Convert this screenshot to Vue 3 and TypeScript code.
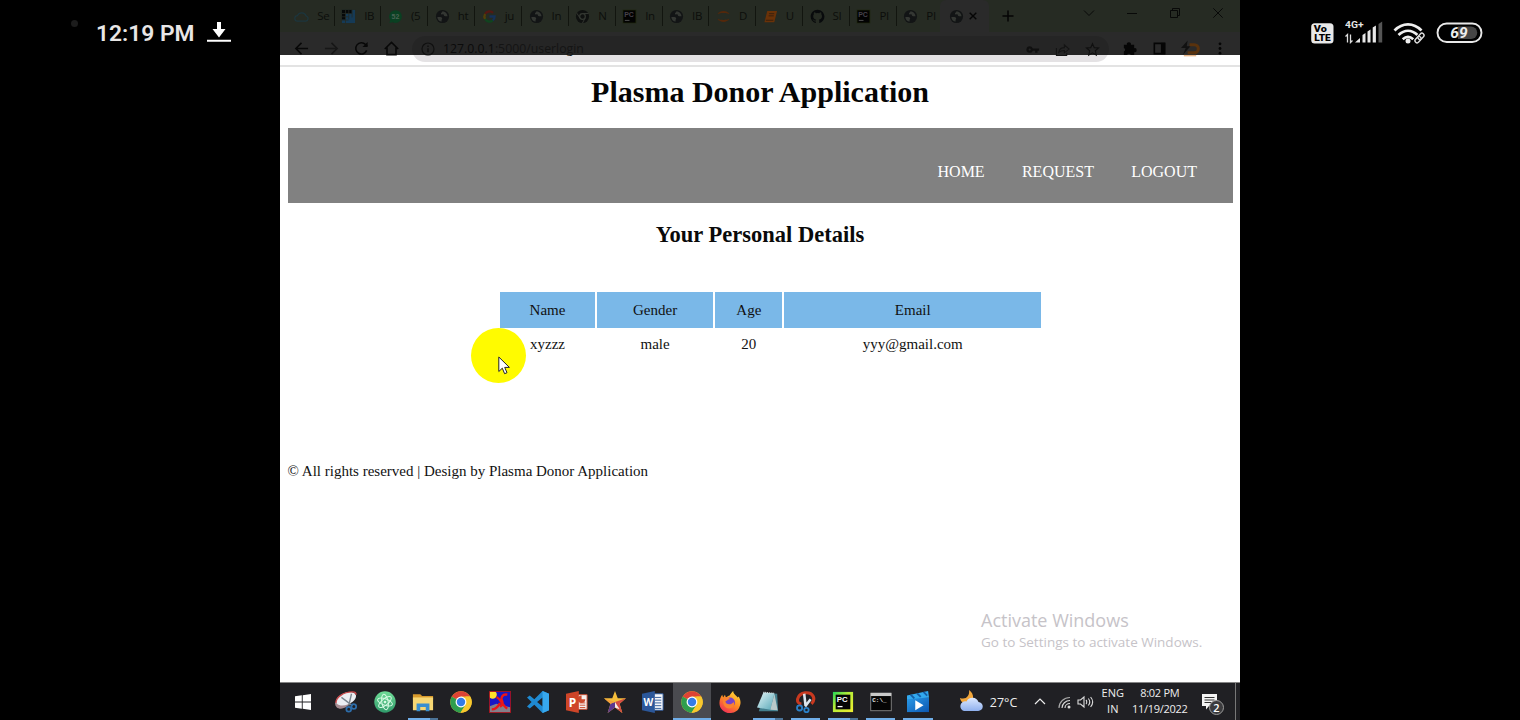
<script setup lang="ts">
interface Tab {
  icon: string
  title: string
}
interface TaskItem {
  icon: string
  running?: boolean
  active?: boolean
  stacked?: boolean
}

const tabs: Tab[] = [
  { icon: 'cloud', title: 'Se' },
  { icon: 'ibm', title: 'IB' },
  { icon: 'chat', title: '(5' },
  { icon: 'globe', title: 'ht' },
  { icon: 'google', title: 'ju' },
  { icon: 'globe', title: 'In' },
  { icon: 'chromium', title: 'N' },
  { icon: 'pc', title: 'In' },
  { icon: 'globe', title: 'IB' },
  { icon: 'jupyter', title: 'D' },
  { icon: 'book', title: 'U' },
  { icon: 'github', title: 'SI' },
  { icon: 'pc', title: 'PI' },
  { icon: 'globe', title: 'PI' },
]

const tasks: TaskItem[] = [
  { icon: 'snip' },
  { icon: 'atom' },
  { icon: 'folder', running: true, stacked: true },
  { icon: 'chrome' },
  { icon: 'paint' },
  { icon: 'vscode' },
  { icon: 'ppt' },
  { icon: 'star' },
  { icon: 'word' },
  { icon: 'chrome', running: true, active: true },
  { icon: 'firefox' },
  { icon: 'notepad', running: true, stacked: true },
  { icon: 'scissors', running: true },
  { icon: 'pycharm', running: true, stacked: true },
  { icon: 'cmd', running: true },
  { icon: 'movies', running: true },
]

const headers = ['Name', 'Gender', 'Age', 'Email']
const row = ['xyzzz', 'male', '20', 'yyy@gmail.com']
const links = ['HOME', 'REQUEST', 'LOGOUT']
</script>

<template>
  <div class="phone">
    <svg class="defs" width="0" height="0">
      <defs>
        <linearGradient id="gAtom" x1="0" y1="0" x2="0" y2="1"><stop offset="0" stop-color="#6fdc97" /><stop offset="1" stop-color="#2f9a6a" /></linearGradient>
        <linearGradient id="gFox" x1="0.8" y1="0" x2="0.2" y2="1"><stop offset="0" stop-color="#ffdb3a" /><stop offset=".5" stop-color="#ff8a22" /><stop offset="1" stop-color="#f02a5a" /></linearGradient>
        <linearGradient id="gPad" x1="0" y1="0" x2="1" y2="1"><stop offset="0" stop-color="#e4f6f8" /><stop offset="1" stop-color="#58a8b8" /></linearGradient>
        <linearGradient id="gPy" x1="0" y1="0" x2="1" y2="1"><stop offset="0" stop-color="#21d759" /><stop offset=".4" stop-color="#b2ee38" /><stop offset="1" stop-color="#f2ee30" /></linearGradient>
        <linearGradient id="gMov" x1="0" y1="0" x2="1" y2="1"><stop offset="0" stop-color="#2a9be8" /><stop offset="1" stop-color="#0c56b0" /></linearGradient>
        <linearGradient id="gCloud" x1="0" y1="0" x2="0" y2="1"><stop offset="0" stop-color="#dbe8ff" /><stop offset="1" stop-color="#8fb0ee" /></linearGradient>

        <symbol id="cloud" viewBox="0 0 16 16"><path d="M4 13h8.500a2.800 2.800 0 0 0 .4-5.500A5 5 0 0 0 3.700 7 3 3 0 0 0 4 13z" fill="none" stroke="#1c363e" stroke-width="1.300" /></symbol>
        <symbol id="ibm" viewBox="0 0 16 16">
          <rect x="1" y="1" width="14" height="14" fill="#153a56" /><rect x="1" y="1" width="10.500" height="3.800" fill="#060809" /><rect x="1" y="4.800" width="3.800" height="6.500" fill="#060809" />
          <path d="M4.800 1v14M8.300 1v10M11.800 1v8M1 4.800h10M1 8.300h7M1 11.800h7" stroke="#252a23" stroke-width=".8" />
        </symbol>
        <symbol id="chat" viewBox="0 0 16 16"><circle cx="8" cy="8" r="6.800" fill="#0a4022" /><path d="M1.500 14.800l1-4 3 3z" fill="#0a4022" /><text x="8" y="10.700" text-anchor="middle" font-size="7.500" font-weight="700" fill="#4a6354" font-family="Liberation Sans, sans-serif">52</text></symbol>
        <symbol id="globe" viewBox="0 0 16 16"><circle cx="8" cy="8" r="7" fill="#121415" /><path d="M2.500 8.500c2.300 0 4.300-.5 5.100 1.200.4 1.200-1 1.300-.5 3.600-2.700 0-4.500-2.200-4.600-4.800zM8 2.500c-.5 1.800-2 1.500-1.600 2.800 1 1.200 2.400-.3 3 1 .3 1.500 1.600 1.700 4 1.400C13 4.700 11 2.700 8 2.500z" fill="#343733" /></symbol>
        <symbol id="google" viewBox="0 0 16 16"><g fill="none" stroke-width="2.500"><path d="M3.300 5.300A5.400 5.400 0 0 1 11.800 4.200" stroke="#541813" /><path d="M3.300 10.700a5.400 5.400 0 0 1 0-5.400" stroke="#524008" /><path d="M11.500 12.100a5.400 5.400 0 0 1-8.200-1.400" stroke="#10441f" /><path d="M8 8h5.400a5.400 5.400 0 0 1-1.900 4.100" stroke="#153158" /></g></symbol>
        <symbol id="chromium" viewBox="0 0 16 16"><circle cx="8" cy="8" r="7" fill="#0f1110" /><circle cx="8" cy="8" r="3" fill="#0f1110" stroke="#343832" stroke-width="1.300" /><path d="M8 4.800h6.500M5.200 9.500L2 4.500M10.800 9.500L8 14.900" stroke="#343832" /></symbol>
        <symbol id="pc" viewBox="0 0 16 16"><rect x=".8" y=".8" width="14.400" height="14.400" fill="#1c2409" /><rect x="1.500" y="1.500" width="12.800" height="13" fill="#020202" /><text x="2.300" y="8.500" font-size="7.500" font-weight="700" fill="#454149" font-family="Liberation Sans, sans-serif">PC</text><path d="M3 12.200h5" stroke="#454545" stroke-width="1.200" /></symbol>
        <symbol id="jupyter" viewBox="0 0 16 16"><path d="M1.500 5.500C4.200 1 11.800 1 14.500 5.500 10.800 3.800 5.200 3.800 1.500 5.500zM1.500 10.500c2.700 4.500 10.300 4.500 13 0-3.700 1.700-9.300 1.700-13 0z" fill="#54280b" /></symbol>
        <symbol id="book" viewBox="0 0 16 16"><path d="M4.500 2l10.500 0-3 12-10.500 0z" fill="#6a3208" /><path d="M6.500 5h5.500M6 7.300h5.500M3 12h8" stroke="#321e0e" stroke-width=".9" /></symbol>
        <symbol id="github" viewBox="0 0 16 16"><path fill="#080a0c" d="M8 .7C3.900.7.700 4 .7 8c0 3.200 2.100 6 5 7 .4.1.5-.2.500-.4v-1.400c-2 .4-2.500-.9-2.500-.9-.3-.8-.8-1-.8-1-.7-.5.1-.5.1-.5.700.1 1.100.8 1.100.8.700 1.100 1.700.8 2.200.6 0-.5.2-.8.400-1-1.600-.2-3.300-.8-3.300-3.600 0-.8.300-1.500.8-2-.1-.2-.4-1 .1-2 0 0 .6-.2 2 .8a7 7 0 0 1 3.600 0c1.400-1 2-.8 2-.8.400 1 .2 1.800.1 2 .5.500.8 1.200.8 2 0 2.800-1.700 3.400-3.400 3.600.3.200.5.700.5 1.400v2c0 .2.100.5.500.4 2.900-1 5-3.700 5-7C15.300 4 12.100.7 8 .7z" /></symbol>

        <symbol id="snip" viewBox="0 0 24 24"><path d="M0 12.500C0 20 7 21 13 17l9-9z" fill="#a58b90" /><ellipse cx="12" cy="8.500" rx="11.500" ry="6.500" transform="rotate(-22 12 8.500)" fill="#eceef2" /><path d="M1 13C1 7 9 1 19 1c3 0 4 1 4 3" fill="none" stroke="#c8484a" stroke-width="1.500" /><path d="M7 7l12 9M18 3l-3 13" stroke="#7b858e" stroke-width="1.500" /><circle cx="15" cy="20" r="2.600" fill="none" stroke="#2d6daa" stroke-width="1.900" /><circle cx="20.500" cy="17" r="2.600" fill="none" stroke="#2d6daa" stroke-width="1.900" /></symbol>
        <symbol id="atom" viewBox="0 0 24 24"><circle cx="12" cy="12" r="11.700" fill="url(#gAtom)" /><g fill="none" stroke="#d6fae3" stroke-width="1.100"><ellipse cx="12" cy="12" rx="8.500" ry="3.500" transform="rotate(20 12 12)" /><ellipse cx="12" cy="12" rx="8.500" ry="3.500" transform="rotate(80 12 12)" /><ellipse cx="12" cy="12" rx="8.500" ry="3.500" transform="rotate(140 12 12)" /></g><circle cx="12" cy="12" r="1.500" fill="#d6fae3" /></symbol>
        <symbol id="folder" viewBox="0 0 24 24"><path d="M1 3.500h8l2 2h12v4H1z" fill="#d99a2c" /><path d="M1 7h22v14H1z" fill="#f7d774" /><path d="M5 13.500h14V22h-4v-4.500H9V22H5z" fill="#3a8fd0" /></symbol>
        <symbol id="chrome" viewBox="0 0 24 24"><circle cx="12" cy="12" r="11.700" fill="#f4c32c" /><path d="M12 12L1.900 6.100A11.700 11.700 0 0 1 22.100 6.100H12z" fill="#dd4335" /><path d="M1.900 6.100A11.700 11.700 0 0 0 11.500 23.700L17 15l-5-3z" fill="#2f9e4e" /><path d="M22.100 6.100A11.700 11.700 0 0 1 11.500 23.700L17 15l0-8.900z" fill="#f8c82e" /><circle cx="12" cy="12" r="5.900" fill="#fff" /><circle cx="12" cy="12" r="4.600" fill="#347be8" /></symbol>
        <symbol id="paint" viewBox="0 0 24 24"><rect width="24" height="24" fill="#1717c6" /><path d="M0 17l8-3 16 4v6H0z" fill="#83808a" /><circle cx="4" cy="4" r="4.500" fill="#ffe22a" /><path d="M20 4C14 3 13 8 14 10s2 5-2 7M8 7c4 0 7 10 12 12M3 20c4 0 7-3 9-7" fill="none" stroke="#eb1716" stroke-width="2.600" /><rect x=".5" y=".5" width="23" height="23" fill="none" stroke="#a3131e" /></symbol>
        <symbol id="vscode" viewBox="0 0 24 24"><path d="M17 0l7 3v18l-7 3-9-9-5 4-3-2 5-5-5-5 3-2 5 4zM17 7l-6 5 6 5z" fill="#1f8ad2" fill-rule="evenodd" /><path d="M17 0l7 3v18l-7 3z" fill="#37a8ee" /></symbol>
        <symbol id="ppt" viewBox="0 0 24 24"><path d="M11 4h12v16H11z" fill="#f6efed" stroke="#cc4a2d" /><path d="M15 13h6M15 15.500h6M15 18h6" stroke="#cc4a2d" /><path d="M17 5v4h4a4 4 0 1 1-4-4z" fill="#cc4a2d" /><path d="M0 3l14-3v24L0 21z" fill="#cf4528" /><text x="3" y="17" font-size="13" font-weight="700" fill="#fff" font-family="Open Sans, sans-serif">P</text></symbol>
        <symbol id="star" viewBox="0 0 24 24"><path d="M12 0l3 8h9l-7 6 3 10-8-6-8 6 3-10-7-6h9z" fill="#f4bd3b" /><path d="M12 12l12-4-7 6zM12 12l5 2 3 10-8-6z" fill="#d44a44" /><path d="M12 12v6l-8 6 3-10z" fill="#5d3790" /><path d="M12 12L0 8l7 6z" fill="#f4a03b" /><path d="M12 12v6l5 2z" fill="#f5eee7" /></symbol>
        <symbol id="word" viewBox="0 0 24 24"><path d="M11 3h12v18H11z" fill="#f4f6fa" stroke="#2b5797" /><path d="M14 7h7M14 10h7M14 13h7M14 16h7M14 19h7" stroke="#2b5797" /><path d="M0 3l14-3v24L0 21z" fill="#2b579a" /><text x="1.500" y="16.500" font-size="11" font-weight="700" fill="#fff" font-family="Open Sans, sans-serif">W</text></symbol>
        <symbol id="firefox" viewBox="0 0 24 24"><path d="M12 24C5 24 .5 19 .5 13c0-4 1.500-7 3-9l1 3 2-3 1 3c2-1 3-2 4-2 1-2 3-4 4-5 0 3 2 4 4 6l1 1 1-1c3 5 2 9 1 11-1 4-5 7-9.500 7z" fill="url(#gFox)" /><circle cx="12" cy="12.500" r="5.400" fill="#7542c8" /><path d="M5 7c3-1 6 0 7 2-3 0-3 2-5 2 0 4 6 5 9 1 2 5-2 7-5 7-5 0-8-6-6-12z" fill="#fb8230" /></symbol>
        <symbol id="notepad" viewBox="0 0 24 24"><path d="M8 2l14 1 1 19H2z" fill="#437f8e" /><path d="M7 1.500l12 1-4.500 18L0 18z" fill="url(#gPad)" /><path d="M19 3l3.500 18-8-.5z" fill="#b9c9c9" /><path d="M7 1.500l12 1" stroke="#d8e0df" stroke-width="1.500" stroke-dasharray="1 1" /></symbol>
        <symbol id="scissors" viewBox="0 0 24 24"><path d="M7 14C0 14 2 3 11 2s12 7 7 12" fill="none" stroke="#c9391f" stroke-width="3.400" /><path d="M10 3l1.500 13M17 9l-6 8" stroke="#dce5ed" stroke-width="2.800" /><circle cx="5" cy="18.500" r="2.800" fill="none" stroke="#2b80c8" stroke-width="2" /><circle cx="12.500" cy="20.800" r="2.400" fill="none" stroke="#2b80c8" stroke-width="2" /></symbol>
        <symbol id="pycharm" viewBox="0 0 24 24"><rect x="1" y="1" width="22" height="22" fill="url(#gPy)" /><rect x="4" y="4" width="16" height="16" fill="#050505" /><text x="5.300" y="12" font-size="8.500" font-weight="700" fill="#fff" font-family="Liberation Sans, sans-serif">PC</text><path d="M6 17h5.500" stroke="#fff" stroke-width="1.400" /></symbol>
        <symbol id="cmd" viewBox="0 0 24 24"><rect x=".8" y="2.500" width="22.400" height="19" fill="#050505" stroke="#858585" /><rect x=".8" y="2" width="22.400" height="3.500" fill="#c9c9c9" /><text x="2.500" y="12" font-size="6.500" font-weight="700" fill="#e5e5e5" font-family="Liberation Mono, monospace">C:\_</text></symbol>
        <symbol id="movies" viewBox="0 0 24 24"><path d="M0 7h24v16H0z" fill="url(#gMov)" /><path d="M0 5L23 0l1 7L0 9z" fill="#32a9ef" /><path d="M4 4l4 4M11 2.500l4 4M18 1l4 4" stroke="#155da5" stroke-width="2" /><path d="M9 10l9 5.500L9 21z" fill="#fff" /></symbol>
      </defs>
    </svg>

    <aside class="status left">
      <i class="dot"></i>
      <span class="clock">12:19 PM</span>
      <svg class="download" width="24" height="20" viewBox="0 0 24 20"><path d="M10 0h4v7h4.500L12 15.500 5.500 7H10zM0 17.700h24v2H0z" fill="#fff" /></svg>
    </aside>

    <main class="screen">
      <header class="browser">
        <div class="strip">
          <div v-for="(t, i) in tabs" :key="i" class="tab" :class="{ last: i === 13 }">
            <svg width="15" height="15"><use :href="'#' + t.icon" /></svg>
            <span>{{ t.title }}</span>
          </div>
          <div class="tab current">
            <svg width="15" height="15"><use href="#globe" /></svg>
            <svg width="8" height="8" viewBox="0 0 8 8"><path d="M.7.7l6.600 6.600M7.300.7L.7 7.300" stroke="#050505" stroke-width="1.400" /></svg>
          </div>
          <svg class="plus" width="12" height="12" viewBox="0 0 12 12"><path d="M6 .5v11M.5 6h11" stroke="#050505" stroke-width="1.500" /></svg>
          <div class="controls">
            <svg viewBox="0 0 12 12"><path d="M1 3.500l5 5 5-5" /></svg>
            <svg viewBox="0 0 12 12"><path d="M1 6.500h10" /></svg>
            <svg viewBox="0 0 12 12"><path d="M1.500 3.500h7v7h-7zM3.500 3.500v-2h7v7h-2" /></svg>
            <svg viewBox="0 0 12 12"><path d="M1.300 1.300l9.400 9.400M10.700 1.300l-9.400 9.400" /></svg>
          </div>
        </div>
        <div class="toolbar">
          <div class="navicons">
            <svg viewBox="0 0 16 16"><path d="M15 8H2.500M8 2L2 8l6 6" /></svg>
            <svg viewBox="0 0 16 16" class="faint"><path d="M1 8h12.500M8 2l6 6-6 6" /></svg>
            <svg viewBox="0 0 16 16"><path d="M13.500 10A6 6 0 1 1 12.300 3.800L14 5.500" /><path d="M14.500 1v5.500H9z" fill="#080808" stroke="none" /></svg>
            <svg viewBox="0 0 16 16"><path d="M.8 8.500L8 1.500l7.200 7M3.200 7v7.500h9.600V7" /></svg>
          </div>
          <div class="omnibox">
            <svg width="14" height="14" viewBox="0 0 14 14"><circle cx="7" cy="7" r="6" fill="none" stroke="#101010" stroke-width="1.200" /><path d="M7 6.200v4M7 3.500v1.400" stroke="#101010" stroke-width="1.500" /></svg>
            <span class="url">127.0.0.1<em>:5000/userlogin</em></span>
            <div class="actions">
              <svg viewBox="0 0 16 16"><path fill="#101010" fill-rule="evenodd" d="M5 4.500a3.500 3.500 0 1 0 3.300 4.700h2.500V11.500h2.500V9.200H15V6.800H8.300A3.500 3.500 0 0 0 5 4.500zm0 2.300a1.200 1.200 0 1 1 0 2.400 1.200 1.200 0 0 1 0-2.400z" /></svg>
              <svg viewBox="0 0 16 16"><path d="M1.500 6.500v8h11v-3M4 11c.5-3 3-5 6-5V3l5 4.500-5 4V9c-3 0-4.500.5-6 2z" fill="none" stroke="#141414" stroke-width="1.100" /></svg>
              <svg viewBox="0 0 16 16"><path d="M8 1.800l1.900 4.200 4.500.4-3.400 3 1 4.500L8 11.500l-4 2.400 1-4.500-3.400-3 4.500-.4z" fill="none" stroke="#101010" stroke-width="1.200" /></svg>
            </div>
          </div>
          <div class="extensions">
            <svg viewBox="0 0 16 16"><path d="M2 4h3.200a2.200 2.200 0 1 1 4.300 0H13v3.600a2.200 2.200 0 1 1 0 4.300V15H9.400a2.200 2.200 0 0 0-4 0H2v-3.800a2 2 0 0 0 0-3.800z" fill="#060606" /></svg>
            <svg viewBox="0 0 16 16"><path d="M2.500 2.500h11v11h-11z" fill="none" stroke="#050505" stroke-width="1.700" /><path d="M9.500 2h4.500v12H9.500z" fill="#050505" /></svg>
            <svg class="brand" viewBox="0 0 20 18"><path d="M7 0L0 8h5l-3 7 8-9H6z" fill="#111" /><path d="M9 4.500h5a4 4 0 0 1 0 8.500H7" fill="none" stroke="#59320d" stroke-width="3.200" /><path d="M3 16h13" stroke="#e8b78a" stroke-width="1.500" /></svg>
            <svg class="dots" viewBox="0 0 4 16"><g fill="#050505"><circle cx="2" cy="3" r="1.500" /><circle cx="2" cy="8" r="1.500" /><circle cx="2" cy="13" r="1.500" /></g></svg>
          </div>
        </div>
      </header>

      <section class="page">
        <h1>Plasma Donor Application</h1>
        <nav><a v-for="l in links" :key="l">{{ l }}</a></nav>
        <h2>Your Personal Details</h2>
        <div class="table">
          <div v-for="h in headers" :key="h" class="th">{{ h }}</div>
          <div v-for="c in row" :key="c" class="td">{{ c }}</div>
          <div class="halo">
            <svg width="12" height="19" viewBox="0 0 12 19"><path d="M.8 1v14.500l3.500-3.300 2.300 5.500 2.400-1-2.300-5.300h4.700z" fill="#fff" stroke="#222" stroke-width="1" /></svg>
          </div>
        </div>
        <footer>© All rights reserved | Design by Plasma Donor Application</footer>
        <div class="activate">
          <p class="big">Activate Windows</p>
          <p class="small">Go to Settings to activate Windows.</p>
        </div>
      </section>

      <div class="taskbar">
        <div class="start">
          <svg width="16" height="16" viewBox="0 0 16 16"><path d="M0 2.300L6.800 1.300v6.200H0zM7.700 1.200L16 0v7.500H7.700zM0 8.400h6.800v6.300L0 13.700zM7.700 8.400H16V16l-8.300-1.200z" fill="#fff" /></svg>
        </div>
        <div v-for="(t, i) in tasks" :key="i" class="task" :class="{ running: t.running, active: t.active, stacked: t.stacked, narrow: i > 10 }">
          <svg width="22" height="22"><use :href="'#' + t.icon" /></svg>
        </div>
        <div class="tray">
          <svg class="weather" width="24" height="22" viewBox="0 0 24 22"><path d="M10 0c1 6-3 10-9 8 1 5 5 7 9 6 5-2 6-10 0-14z" fill="#f2a63b" /><path d="M5 21h14a4.500 4.500 0 0 0 .5-9 6.500 6.500 0 0 0-12-.5A4.800 4.800 0 0 0 5 21z" fill="url(#gCloud)" /></svg>
          <span class="temp">27°C</span>
          <svg class="up" width="12" height="8" viewBox="0 0 12 8"><path d="M1 7l5-5 5 5" fill="none" stroke="#eee" stroke-width="1.200" /></svg>
          <svg class="net" width="13" height="13" viewBox="0 0 13 13"><g fill="none" stroke="#ddd" stroke-width="1.100"><path d="M1 12C1 6 6 1.500 12 1.500" stroke="#aaa" /><path d="M4 12c0-4 3.500-7.500 8-7.500M7 12c0-2.500 2-4.500 5-4.500" /></g><circle cx="11" cy="11" r="1.500" fill="#ddd" /></svg>
          <svg class="vol" width="17" height="14" viewBox="0 0 17 14"><path d="M1 5h2.500L7 2v10L3.500 9H1zM9 5c1 1 1 3 0 4M11.300 3.500c1.700 2 1.700 5 0 7M13.600 2c2.500 3 2.500 7 0 10" fill="none" stroke="#ddd" stroke-width="1.100" /></svg>
          <div class="lang"><span>ENG</span><span>IN</span></div>
          <div class="time"><span>8:02 PM</span><span>11/19/2022</span></div>
          <svg class="notif" width="24" height="24" viewBox="0 0 24 24"><path d="M1 2h15v12H8l-3 3.500V14H1z" fill="#f4f4f4" /><path d="M3.500 5.500h10M3.500 8h10M3.500 10.500h7" stroke="#333" /><circle cx="15.500" cy="15.500" r="7" fill="#3b3b3e" stroke="#9b9b9b" /><text x="15.500" y="19.500" text-anchor="middle" font-size="11" font-weight="600" fill="#fff" font-family="Open Sans, sans-serif">2</text></svg>
          <i class="peek"></i>
        </div>
      </div>
    </main>

    <aside class="status right">
      <svg width="23" height="21" viewBox="0 0 23 21"><rect x=".2" y=".3" width="22.300" height="20.200" rx="3.500" fill="#e8e8e8" /><g fill="#000" font-weight="900" font-family="Roboto, sans-serif" font-size="9.500"><text x="2.800" y="9.300" textLength="13" lengthAdjust="spacingAndGlyphs">Vo</text><text x="3.200" y="18.300" textLength="16.500" lengthAdjust="spacingAndGlyphs">LTE</text></g></svg>
      <svg class="signal" width="39" height="24" viewBox="0 0 39 24"><text x="0" y="8.300" font-size="9.500" font-weight="700" fill="#e5e5e5" font-family="Roboto, sans-serif" textLength="18.500" lengthAdjust="spacingAndGlyphs">4G+</text><path d="M2.500 22.500v-8l-2 2M5.500 14.500v8l2-2" stroke="#ddd" stroke-width="1.300" fill="none" /><path d="M10 22.500l5-4.500v4.500zM17.500 15l3-2v9.500h-3zM22.500 11.500l3-2v13h-3zM27.700 7.500l3.200-2v17h-3.200z" fill="#e8e8e8" /><path d="M33.500 4l3.700-2.500v21h-3.700z" fill="#555" /></svg>
      <svg class="wifi" width="34" height="22" viewBox="0 0 34 22"><g fill="none" stroke="#eee" stroke-width="2.700"><path d="M1.500 7.500c8-8.200 19-8.200 27 0M5.500 12c6-5.700 13-5.700 19 0M9.700 16.200c3.500-3 7.100-3 10.600 0" /></g><circle cx="15" cy="18" r="2.500" fill="#eee" /><g transform="rotate(-48 26.500 15)"><rect x="19.500" y="11.500" width="13" height="7" fill="#000" /><g fill="none" stroke="#ddd" stroke-width="1.400"><rect x="20.800" y="12.900" width="7" height="4.200" rx="2.100" /><rect x="25.200" y="12.900" width="7" height="4.200" rx="2.100" /></g></g></svg>
      <svg class="battery" width="47" height="22" viewBox="0 0 47 22"><rect x="1.500" y="1.500" width="44" height="18.500" rx="9.200" fill="#000" stroke="#e8e8e8" stroke-width="1.900" /><path d="M22 4.500h13a6 6 0 0 1 0 12.500H22z" fill="#454545" /><text x="23" y="16.300" text-anchor="middle" font-family="Roboto, sans-serif" font-size="15.500" font-style="italic" font-weight="700" fill="#eee">69</text></svg>
    </aside>
  </div>
</template>

<style>
html,
body {
  margin: 0;
  background: #000;
  overflow: hidden;
}
</style>

<style scoped>
* { box-sizing: border-box; }
svg { display: block; flex: none; }
.phone {
  display: flex;
  width: 1520px;
  height: 720px;
  background: #000;
  overflow: hidden;
}
.defs { position: absolute; }
.status { display: flex; align-items: flex-start; width: 280px; }
.left { padding: 20px 0 0 71px; }
.dot { width: 7px; height: 7px; border-radius: 50%; background: #1c1c1c; }
.clock {
  margin-left: 18px;
  width: 98px;
  font: 600 22.800px/27px Roboto, sans-serif;
  color: #e8e6e6;
  white-space: nowrap;
}
.download { margin: 2px 0 0 13px; }
.right { padding: 23px 0 0 71px; }
.signal { margin: -3px 0 0 11px; }
.wifi { margin: 0 0 0 9px; }
.battery { margin: -1px 0 0 9px; }

.screen {
  display: flex;
  flex-direction: column;
  width: 960px;
  background: #fff;
}
.browser { height: 67px; border-bottom: 2px solid #e3e3e3; flex: none; font-family: "Open Sans", sans-serif; }
.strip {
  display: flex;
  height: 32px;
  padding-left: 7.800px;
  background: #262b23;
}
.tab {
  display: flex;
  align-items: center;
  width: 46.850px;
  height: 20px;
  margin-top: 6px;
  padding: 0 0 0 6.500px;
  border-right: 1px solid #12150f;
  flex: none;
}
.tab span {
  margin-left: 8px;
  font-size: 11.500px;
  line-height: 18px;
  letter-spacing: -.3px;
  color: #0c0e0b;
  white-space: nowrap;
  flex: none;
}
.tab.last { border: 0; width: 43px; }
.tab.current {
  width: 49px;
  height: 32px;
  margin: 0;
  padding: 0 12px 0 9px;
  justify-content: space-between;
  border: 0;
  border-radius: 6px 6px 0 0;
  background: #2a2a2a;
}
.plus { margin: 10px 0 0 13px; }
.controls { display: flex; gap: 31px; margin: 7px 0 0 69px; }
.controls svg { width: 12px; height: 12px; fill: none; stroke: #080908; stroke-width: 1; }
.toolbar {
  display: flex;
  height: 33px;
  padding-top: 4px;
  background: linear-gradient(#2a2a2a 23px, #fff 23px);
}
.navicons { display: flex; gap: 15px; padding: 5px 0 0 14px; width: 132px; flex: none; }
.navicons svg { width: 15px; height: 15px; fill: none; stroke: #080808; stroke-width: 1.700; }
.navicons .faint { stroke: #171717; }
.omnibox {
  display: flex;
  width: 697px;
  height: 26px;
  padding: 6px 9px 0;
  border-radius: 13px;
  background: linear-gradient(#252525 19px, #e4e2e4 19px);
  flex: none;
}
.url { margin: -3px 0 0 8px; font-size: 12.300px; line-height: 20px; color: #0b0b0b; white-space: nowrap; }
.url em { font-style: normal; color: #141414; }
.actions { display: flex; gap: 15px; margin-left: auto; }
.actions svg { width: 15px; height: 15px; }
.extensions { display: flex; gap: 15px; padding: 5px 0 0 13px; }
.extensions svg { width: 15px; height: 15px; }
.extensions .brand { width: 19px; height: 18px; margin: -1px 0 0 -1px; }
.extensions .dots { width: 4px; height: 15px; margin-left: 3px; }

.page {
  position: relative;
  height: 615px;
  padding: 0 7.500px;
  font-family: "Liberation Serif", serif;
  font-size: 15px;
  color: #111;
  flex: none;
}
h1 { margin: 8px 0 19px; font-size: 30px; line-height: 34px; text-align: center; color: #050505; }
nav {
  display: flex;
  justify-content: flex-end;
  gap: 37.300px;
  height: 75px;
  padding: 33px 35.500px 0 0;
  background: #818181;
}
nav a { font-size: 16px; line-height: 22px; color: #fff; }
h2 { margin: 19px 0 44px; font-size: 22.500px; line-height: 26px; text-align: center; color: #0a0a0a; }
.table {
  position: relative;
  display: grid;
  grid-template-columns: 95px 116.500px 67.300px 256.900px;
  grid-template-rows: 36px 33px;
  column-gap: 1.850px;
  margin-left: 212.500px;
  width: max-content;
  text-align: center;
}
.th { background: #7ab8e8; line-height: 37px; }
.td { position: relative; z-index: 1; line-height: 33px; }
.halo {
  position: absolute;
  left: -29px;
  top: 36px;
  width: 55px;
  height: 55px;
  padding: 28px 0 0 27px;
  border-radius: 50%;
  background: #fffb00;
}
footer { margin-top: 100px; line-height: 20px; }
.activate {
  position: absolute;
  left: 701px;
  top: 541px;
  font-family: "Open Sans", sans-serif;
  color: #c6c3c8;
  white-space: nowrap;
}
.activate p { margin: 0; }
.big { font-size: 18px; line-height: 24px; }
.small { padding-top: 1px; font-size: 13.500px; line-height: 19px; }

.taskbar {
  display: flex;
  height: 38px;
  border-top: 1px solid #858585;
  background: #202024;
  font-family: "Open Sans", sans-serif;
  color: #eee;
}
.start { width: 47px; padding: 11px 0 0 15px; flex: none; }
.task {
  position: relative;
  display: flex;
  justify-content: center;
  width: 38.400px;
  padding-top: 7.500px;
  flex: none;
}
.task.narrow { width: 37.500px; }
.task.active { background: #4a4b50; }
.running::after {
  content: "";
  position: absolute;
  left: 4px;
  right: 4px;
  bottom: 0;
  height: 2px;
  background: #70aee8;
}
.stacked::after { background: linear-gradient(90deg, #70aee8 22px, #4c7396 22px); }
.active::after { left: 0; right: 0; }
.tray { position: relative; display: flex; flex: 1; }
.weather { margin: 7px 0 0 22px; }
.temp { margin: 10px 0 0 7px; width: 30px; font-size: 12.500px; line-height: 20px; white-space: nowrap; }
.up { margin: 14px 0 0 14px; }
.net { margin: 13px 0 0 12px; }
.vol { margin: 12px 0 0 6px; }
.lang, .time { display: flex; flex-direction: column; align-items: center; font-size: 11px; line-height: 16px; padding-top: 2px; white-space: nowrap; flex: none; }
.lang { width: 24px; margin-left: 7px; }
.time { width: 58px; margin-left: 6px; letter-spacing: -.3px; }
.notif { margin: 9px 0 0 12px; }
.peek { width: 1px; height: 37px; background: #777; margin-left: 10px; }
</style>
